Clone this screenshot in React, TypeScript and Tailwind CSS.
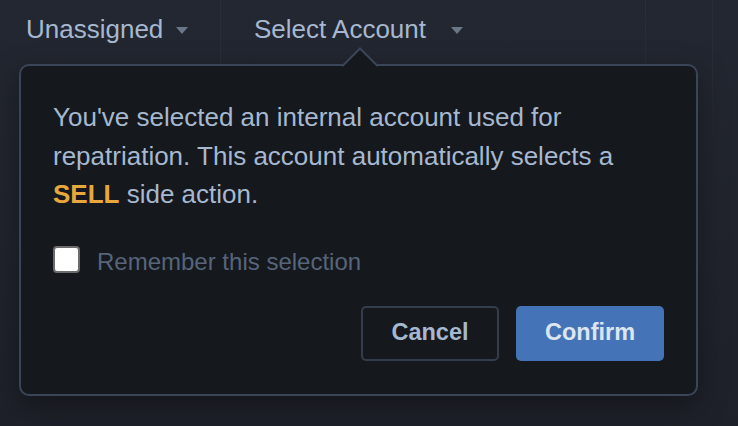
import React from "react";

const Caret: React.FC<{ className?: string }> = ({ className }) => (
  <svg width="12" height="7" viewBox="0 0 12 7" className={className}>
    <polygon points="0,0 12,0 6,7" fill="#6b7686" />
  </svg>
);

const Divider: React.FC = () => (
  <div className="w-px shrink-0 bg-gradient-to-b from-[#2a2e39] via-[#282c36] to-transparent" />
);

const App: React.FC = () => {
  return (
    <div
      className="relative w-[738px] h-[426px] overflow-hidden bg-gradient-to-b from-[#232731] to-[#1e2129] text-[#a6b8cf]"
      style={{ fontFamily: '"Liberation Sans", Arial, sans-serif' }}
    >
      {/* Table header columns */}
      <div className="flex h-[150px]">
        <div className="w-[220px] shrink-0 pl-[26px] pt-[13px]">
          <div className="flex items-center text-[26px] leading-[32px]">
            <span>Unassigned</span>
            <Caret className="ml-[13px] mt-[2px]" />
          </div>
        </div>
        <Divider />
        <div className="w-[424px] shrink-0 pl-[33px] pt-[13px]">
          <div className="flex items-center text-[26px] leading-[32px]">
            <span>Select Account</span>
            <Caret className="ml-[25px] mt-[2px]" />
          </div>
        </div>
        <Divider />
        <div className="w-[66px] shrink-0" />
        <Divider />
        <div className="flex-1" />
      </div>

      {/* Popover */}
      <div className="absolute left-[19px] top-[64px] w-[679px] rounded-[10px] border-2 border-[#3b4558] bg-[#15181d] px-[32px] pt-[32px] pb-[33px] shadow-[0_10px_30px_rgba(0,0,0,0.35)]">
        <svg
          width="36"
          height="20"
          viewBox="0 0 36 20"
          className="absolute left-[321px] top-[-19px]"
        >
          <polygon points="1,19 18,1 35,19" fill="#15181d" />
          <polyline points="0,18.5 1,18.5 18,1.5 35,18.5 36,18.5" fill="none" stroke="#3b4558" strokeWidth="2" />
        </svg>

        <p className="text-[26px] leading-[38.5px] text-[#a6b8cf]">
          You've selected an internal account used for repatriation. This account automatically selects a{" "}
          <span className="font-bold text-[#e7a73d]">SELL</span> side action.
        </p>

        <label className="mt-[32px] flex items-start">
          <span className="block h-[27px] w-[27px] rounded-[4px] border-2 border-[#6c6c6c] bg-white" />
          <span className="ml-[17px] mt-[5px] text-[24px] leading-[22px] text-[#56657a]">
            Remember this selection
          </span>
        </label>

        <div className="mt-[33px] flex justify-end gap-[17px]">
          <button className="h-[55px] w-[138px] rounded-[5px] border-2 border-[#343d4d] bg-transparent text-[23.5px] font-bold text-[#a6b8cf]">
            Cancel
          </button>
          <button className="h-[55px] w-[148px] rounded-[5px] bg-[#4573b7] text-[23.5px] font-bold text-[#dde5ef]">
            Confirm
          </button>
        </div>
      </div>
    </div>
  );
};

export default App;
